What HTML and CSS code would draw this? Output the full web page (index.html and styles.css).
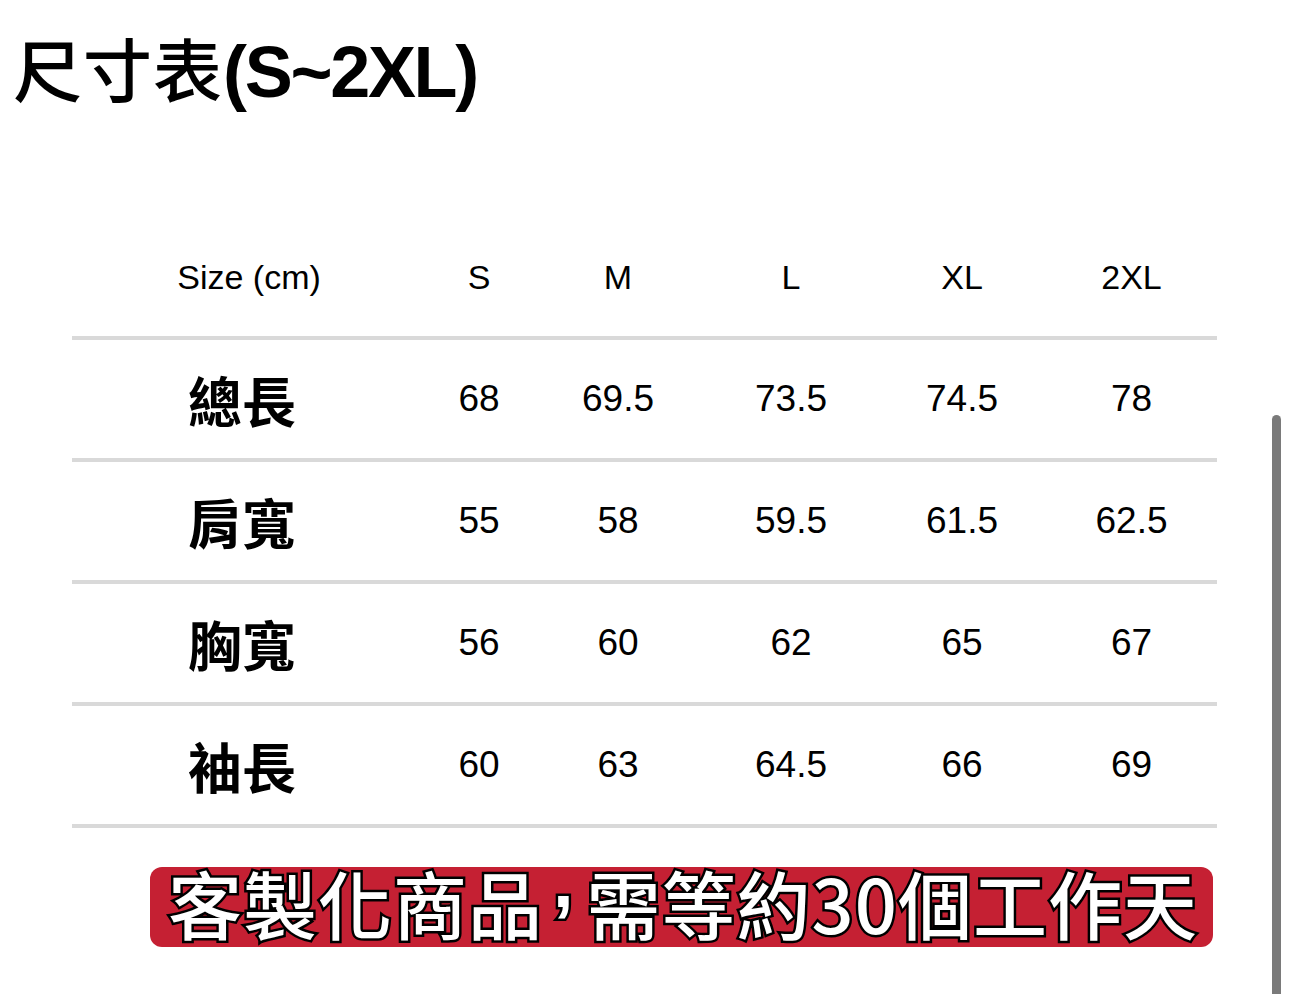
FILE: index.html
```html
<!DOCTYPE html>
<html lang="zh-Hant">
<head>
<meta charset="utf-8">
<title>尺寸表</title>
<link rel="stylesheet" href="styles.css">
</head>
<body>
<main class="page">
  <h1 class="title"><span class="title-cjk">尺寸表</span><span class="title-latin">(S~2XL)</span></h1>
  <section class="chart">
    <div class="row head">
      <div class="cell first">Size (cm)</div>
      <div class="cell">S</div>
      <div class="cell">M</div>
      <div class="cell">L</div>
      <div class="cell">XL</div>
      <div class="cell">2XL</div>
    </div>
    <div class="row data">
      <div class="cell name">總長</div>
      <div class="cell">68</div>
      <div class="cell">69.5</div>
      <div class="cell">73.5</div>
      <div class="cell">74.5</div>
      <div class="cell">78</div>
    </div>
    <div class="row data">
      <div class="cell name">肩寬</div>
      <div class="cell">55</div>
      <div class="cell">58</div>
      <div class="cell">59.5</div>
      <div class="cell">61.5</div>
      <div class="cell">62.5</div>
    </div>
    <div class="row data">
      <div class="cell name">胸寬</div>
      <div class="cell">56</div>
      <div class="cell">60</div>
      <div class="cell">62</div>
      <div class="cell">65</div>
      <div class="cell">67</div>
    </div>
    <div class="row data">
      <div class="cell name">袖長</div>
      <div class="cell">60</div>
      <div class="cell">63</div>
      <div class="cell">64.5</div>
      <div class="cell">66</div>
      <div class="cell">69</div>
    </div>
  </section>
  <div class="notice"><span>客製化商品</span><span class="comma">,</span><span>需等約30個工作天</span></div>
</main>
<div class="scrollbar"></div>
</body>
</html>
```
FILE: styles.css
```css
html, body {
  margin: 0;
  padding: 0;
  background: #ffffff;
  color: #000000;
  overflow: hidden;
}

body {
  width: 1290px;
  height: 994px;
  position: relative;
  font-family: "Liberation Sans", Arial, "Noto Sans CJK TC", sans-serif;
}

.page {
  display: flex;
  flex-direction: column;
  align-items: flex-start;
}

.title {
  margin: 31px 0 0 0;
  padding-left: 13px;
  height: 72px;
  font-size: 72px;
  line-height: 72px;
  font-weight: 700;
  white-space: nowrap;
  display: flex;
  align-items: baseline;
}

.title-cjk {
  font-family: "Noto Sans CJK TC", sans-serif;
  font-weight: 500;
  font-size: 69px;
  letter-spacing: 1px;
}

.title-latin {
  font-family: "Liberation Sans", Arial, sans-serif;
  font-weight: 700;
  letter-spacing: -2.3px;
}

.chart {
  margin: 115px 0 0 72px;
  width: 1145px;
  border-bottom: 4px solid #d9d9d9;
}

.row {
  display: grid;
  grid-template-columns: 354px 106px 172px 174px 168px 171px;
  height: 118px;
  align-items: center;
}

.row.data {
  border-top: 4px solid #d9d9d9;
}

.cell {
  text-align: center;
  white-space: nowrap;
  font-size: 37px;
}

.head .cell {
  font-size: 34px;
}

.cell.name {
  font-family: "Noto Sans CJK TC", sans-serif;
  font-weight: 700;
  font-size: 54px;
  padding-right: 14px;
}

.notice {
  margin: 39px 0 0 150px;
  width: 1063px;
  height: 80px;
  box-sizing: border-box;
  padding: 0 0 10px 18px;
  border-radius: 12px;
  background: #c52033;
  display: flex;
  align-items: center;
  font-family: "Noto Sans CJK TC", sans-serif;
  font-weight: 500;
  font-size: 74px;
  line-height: 1;
  letter-spacing: 1px;
  color: #ffffff;
  -webkit-text-stroke: 5px #000000;
  paint-order: stroke fill;
  white-space: nowrap;
}

.notice .comma {
  font-family: "Liberation Sans", Arial, sans-serif;
  font-weight: 700;
  margin: 0 12px 0 10px;
  transform: translateY(-20px);
  display: inline-block;
}

.scrollbar {
  position: absolute;
  left: 1272px;
  top: 415px;
  width: 9px;
  height: 600px;
  border-radius: 5px;
  background: #7a7a7a;
}
```
